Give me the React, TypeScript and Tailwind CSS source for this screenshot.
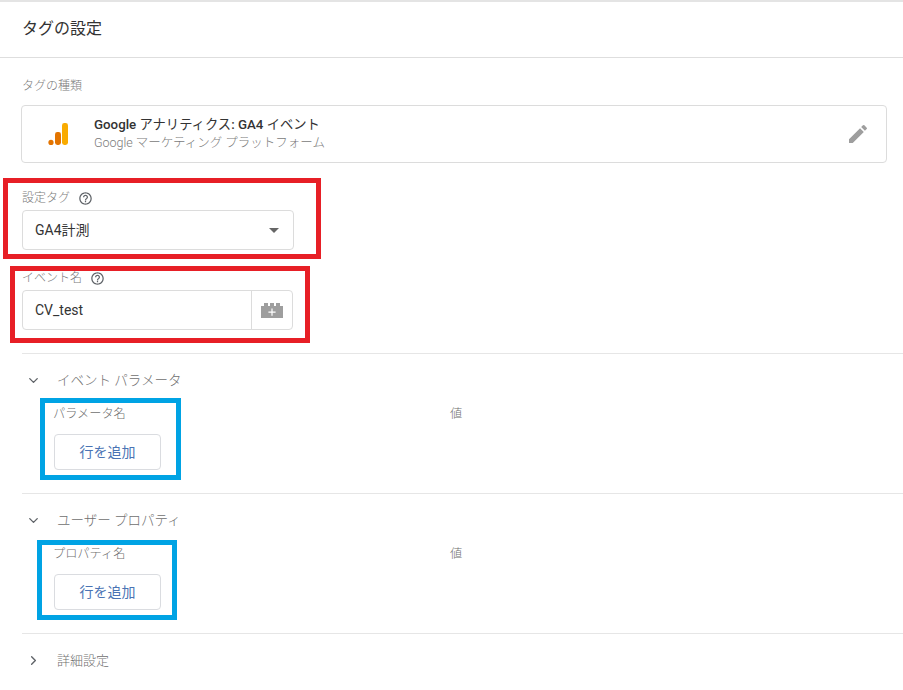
import { ChevronDown, ChevronRight } from 'lucide-react';

const font = { fontFamily: 'Roboto, "Noto Sans CJK JP", sans-serif' };

const HelpIcon = () => (
    <svg width="15" height="15" viewBox="0 0 24 24" fill="#5f6368">
        <path d="M11 18h2v-2h-2v2zm1-16C6.48 2 2 6.48 2 12s4.48 10 10 10 10-4.48 10-10S17.52 2 12 2zm0 18c-4.41 0-8-3.59-8-8s3.59-8 8-8 8 3.59 8 8-3.59 8-8 8zm0-14c-2.21 0-4 1.79-4 4h2c0-1.1.9-2 2-2s2 .9 2 2c0 2-3 1.75-3 5h2c0-2.25 3-2.5 3-5 0-2.21-1.79-4-4-4z" />
    </svg>
);

const AnalyticsIcon = () => (
    <svg width="24" height="24" viewBox="0 0 24 24">
        <rect x="18" y="1" width="6" height="22" rx="2.4" fill="#f9ab00" />
        <rect x="11" y="10" width="6" height="13" rx="2.4" fill="#e37400" />
        <circle cx="7" cy="20.400" r="2.600" fill="#e37400" />
    </svg>
);

const PencilIcon = () => (
    <svg width="24" height="24" viewBox="0 0 24 24" fill="#9e9e9e">
        <path d="M3 17.25V21h3.75L17.81 9.94l-3.75-3.75L3 17.25zM20.71 7.04a1 1 0 0 0 0-1.41l-2.34-2.34a1 1 0 0 0-1.41 0l-1.83 1.83 3.75 3.75 1.83-1.83z" />
    </svg>
);

const BrickIcon = () => (
    <svg width="24" height="15" viewBox="0 0 24 15">
        <path fill="#9e9e9e" d="M1 3h3V0h4v3h2V0h4v3h2V0h4v3h3v12H1z" />
        <path fill="#fff" d="M11.4 5.5h1.2v3h3v1.2h-3v3h-1.2v-3h-3V8.500h3z" />
    </svg>
);

interface ParamSectionProps {
    title: string;
    nameLabel: string;
}

const ParamSection = ({ title, nameLabel }: ParamSectionProps) => (
    <section className="h-[140px] ml-[22px] border-t border-[#e6e6e6]">
        <div className="h-[50px] pt-[2px] flex items-center gap-[16px] pl-[4px] text-[13.500px] text-[#6f6f6f] font-light">
            <ChevronDown size={15} strokeWidth={2.2} className="text-[#5f6368]" />
            <span>{title}</span>
        </div>
        <div className="flex h-[20px] items-center pl-[31px] text-[12.200px] text-[#6f6f6f] font-light">
            <span className="w-[397px]">{nameLabel}</span>
            <span>値</span>
        </div>
        <button className="mt-[10px] ml-[32px] w-[107px] h-[36px] rounded-[4px] border border-[#dadce0] bg-white text-[14px] text-[#4a74b4]">
            行を追加
        </button>
    </section>
);

export default function App() {
    return (
        <div className="relative w-[903px] h-[690px] overflow-hidden bg-white text-[#212121]" style={font}>
            <div className="h-[2px] bg-[#e4e4e4]" />
            <header className="h-[56px] flex items-center pl-[22px] pb-[2px] border-b border-[#dedede] text-[16px] text-[#333]">
                タグの設定
            </header>

            <div className="pl-[22px] pr-[16px]">
                <div className="h-[47px] pt-[19px] text-[12px] leading-[18px] text-[#7a7a7a] font-light">タグの種類</div>
                <div className="h-[58px] -ml-px flex items-center border border-[#dcdcdc] rounded-[4px] pl-[22px] pr-[16px]">
                    <AnalyticsIcon />
                    <div className="ml-[26px] flex-1">
                        <div className="text-[13.300px] leading-[17px] text-[#333] -mt-[2px] mb-[1px]">
                            <span className="font-medium">Google</span> アナリティクス<span className="font-medium">: GA4</span> イベント
                        </div>
                        <div className="text-[12.500px] leading-[17px] text-[#7a7a7a] font-light">Google マーケティング プラットフォーム</div>
                    </div>
                    <PencilIcon />
                </div>

                <div className="mt-[25px] h-[20px] flex items-center gap-[8px] text-[12px] text-[#7a7a7a] font-light">
                    設定タグ
                    <HelpIcon />
                </div>
                <div className="w-[272px] h-[40px] flex items-center justify-between mt-[2px] pl-[12px] pr-[14px] border border-[#dcdcdc] rounded-[4px] text-[14px] text-[#333]">
                    GA4計測
                    <span className="w-0 h-0 border-x-[5px] border-x-transparent border-t-[5px] border-t-[#666]" />
                </div>

                <div className="mt-[18px] h-[20px] flex items-center gap-[8px] text-[12px] text-[#7a7a7a] font-light">
                    イベント名
                    <HelpIcon />
                </div>
                <div className="w-[271px] h-[40px] flex items-center mt-[2px] border border-[#dcdcdc] rounded-[4px] text-[14px] text-[#333]">
                    <span className="flex-1 pl-[12px]">CV_test</span>
                    <span className="w-[41px] h-full flex items-center justify-center border-l border-[#dcdcdc]">
                        <BrickIcon />
                    </span>
                </div>
            </div>

            <div className="mt-[23px]">
                <ParamSection title="イベント パラメータ" nameLabel="パラメータ名" />
                <ParamSection title="ユーザー プロパティ" nameLabel="プロパティ名" />
                <div className="ml-[22px] h-[54px] border-t border-[#e6e6e6] flex items-center gap-[16px] pl-[4px] text-[13px] text-[#6f6f6f] font-light">
                    <ChevronRight size={15} strokeWidth={2.2} className="text-[#5f6368]" />
                    <span>詳細設定</span>
                </div>
            </div>

            {/* annotation frames drawn over the screenshot */}
            <div className="absolute left-[3px] top-[178px] w-[318px] h-[81px] border-[5px] border-[#e71f26]" />
            <div className="absolute left-[10px] top-[266px] w-[300px] h-[77px] border-[5px] border-[#e71f26]" />
            <div className="absolute left-[40px] top-[398px] w-[141px] h-[82px] border-[5px] border-[#00a3e4]" />
            <div className="absolute left-[37px] top-[540px] w-[140px] h-[80px] border-[5px] border-[#00a3e4]" />
        </div>
    );
}
